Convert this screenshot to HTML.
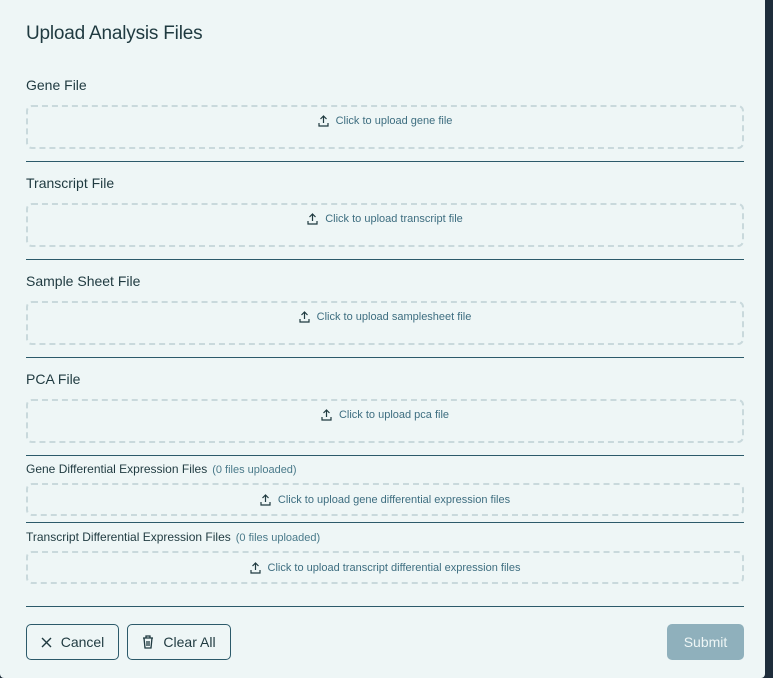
<!DOCTYPE html>
<html><head><style>
*{box-sizing:border-box;margin:0;padding:0}
body{width:773px;height:678px;overflow:hidden;background:#1e2d3b;font-family:"Liberation Sans",sans-serif;position:relative}
.m{position:absolute;left:0;top:0;width:765px;height:678px;background:#eef6f6;border-radius:0 0 4px 4px}
h1{position:absolute;left:26px;top:23px;font-size:19px;font-weight:normal;color:#1f3a40;letter-spacing:-.2px}
.l{position:absolute;left:26px;font-size:14px;color:#1f3a40}
.ls{font-size:12px}
.ls span{color:#4a7a8a;font-size:11px;margin-left:5px}
.d{position:absolute;left:26px;width:718px;border:2px dashed #c9d9dc;border-radius:6px;display:flex;align-items:center;justify-content:center;font-size:11px;color:#3e6e80}
.d.t{align-items:flex-start;padding-top:8px}
.d svg{margin-right:7px}
.hr{position:absolute;left:26px;width:718px;height:1px;background:#2c5a6a}
.b{position:absolute;top:624px;height:36px;border:1px solid #2c5a6a;border-radius:5px;display:flex;align-items:center;justify-content:center;font-size:14px;color:#1f3a40}
.b svg{margin-right:9px}
</style></head><body>
<div class="m">
<h1>Upload Analysis Files</h1>
</div>
<div class="l" style="top:77px">Gene File</div>
<div class="d t" style="top:105px;height:44px"><svg width="11" height="12" viewBox="0 0 11 12" fill="none" stroke="#1f3a40" stroke-width="1.2"><path d="M5.5 8V1M2.5 4l3-3 3 3M1 8v3h9V8"/></svg>Click to upload gene file</div>
<div class="hr" style="top:161px"></div>
<div class="l" style="top:175px">Transcript File</div>
<div class="d t" style="top:203px;height:44px"><svg width="11" height="12" viewBox="0 0 11 12" fill="none" stroke="#1f3a40" stroke-width="1.2"><path d="M5.5 8V1M2.5 4l3-3 3 3M1 8v3h9V8"/></svg>Click to upload transcript file</div>
<div class="hr" style="top:259px"></div>
<div class="l" style="top:273px">Sample Sheet File</div>
<div class="d t" style="top:301px;height:44px"><svg width="11" height="12" viewBox="0 0 11 12" fill="none" stroke="#1f3a40" stroke-width="1.2"><path d="M5.5 8V1M2.5 4l3-3 3 3M1 8v3h9V8"/></svg>Click to upload samplesheet file</div>
<div class="hr" style="top:357px"></div>
<div class="l" style="top:371px">PCA File</div>
<div class="d t" style="top:399px;height:44px"><svg width="11" height="12" viewBox="0 0 11 12" fill="none" stroke="#1f3a40" stroke-width="1.2"><path d="M5.5 8V1M2.5 4l3-3 3 3M1 8v3h9V8"/></svg>Click to upload pca file</div>
<div class="hr" style="top:455px"></div>
<div class="l ls" style="top:462px">Gene Differential Expression Files<span>(0 files uploaded)</span></div>
<div class="d" style="top:483px;height:33px"><svg width="11" height="12" viewBox="0 0 11 12" fill="none" stroke="#1f3a40" stroke-width="1.2"><path d="M5.5 8V1M2.5 4l3-3 3 3M1 8v3h9V8"/></svg>Click to upload gene differential expression files</div>
<div class="hr" style="top:522px"></div>
<div class="l ls" style="top:530px">Transcript Differential Expression Files<span>(0 files uploaded)</span></div>
<div class="d" style="top:551px;height:33px"><svg width="11" height="12" viewBox="0 0 11 12" fill="none" stroke="#1f3a40" stroke-width="1.2"><path d="M5.5 8V1M2.5 4l3-3 3 3M1 8v3h9V8"/></svg>Click to upload transcript differential expression files</div>
<div class="hr" style="top:606px"></div>
<div class="b" style="left:26px;width:93px"><svg width="11" height="11" viewBox="0 0 11 11" stroke="#1f3a40" stroke-width="1.4"><path d="M1 1l9 9M10 1l-9 9"/></svg>Cancel</div>
<div class="b" style="left:127px;width:104px"><svg width="12" height="14" viewBox="0 0 12 14" fill="none" stroke="#1f3a40" stroke-width="1.3"><path d="M1 3h10M4 3V1h4v2M2 3l1 10h6l1-10M5 6v5M7 6v5"/></svg>Clear All</div>
<div class="b" style="left:667px;width:77px;border:none;background:#8fb0bc;color:#eef6f6">Submit</div>
</body></html>
